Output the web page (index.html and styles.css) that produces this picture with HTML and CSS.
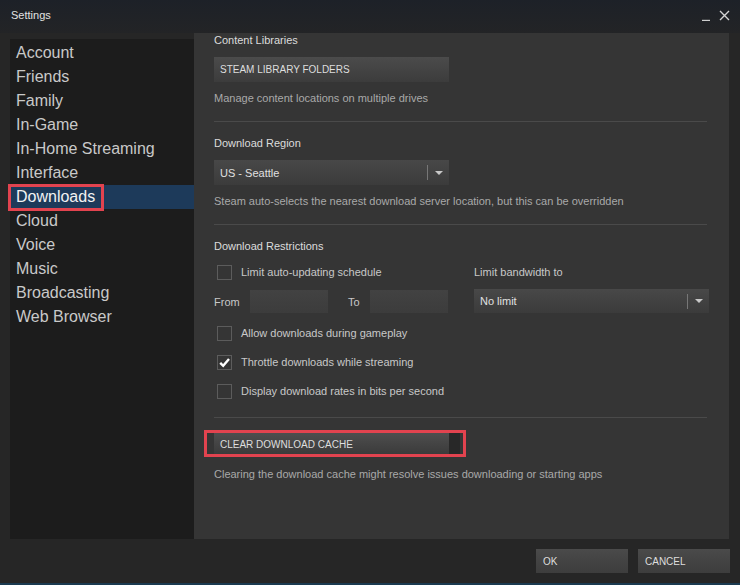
FILE: index.html
```html
<!DOCTYPE html>
<html>
<head>
<meta charset="utf-8">
<link rel="stylesheet" href="styles.css">
</head>
<body>
<div class="window">
  <div class="titlebar">
    <span class="title">Settings</span>
    <div class="controls">
      <svg class="ctl" width="10" height="10" viewBox="0 0 10 10"><path d="M1 9.5H9" stroke="#cfcfcf" stroke-width="1.4"/></svg>
      <svg class="ctl" width="11" height="11" viewBox="0 0 11 11"><path d="M1 1L10 10M10 1L1 10" stroke="#d4d4d4" stroke-width="1.4"/></svg>
    </div>
  </div>
  <div class="main">
    <nav class="sidebar">
      <div class="nav-item">Account</div>
      <div class="nav-item">Friends</div>
      <div class="nav-item">Family</div>
      <div class="nav-item">In-Game</div>
      <div class="nav-item">In-Home Streaming</div>
      <div class="nav-item">Interface</div>
      <div class="nav-item active"><span class="mark">Downloads</span></div>
      <div class="nav-item">Cloud</div>
      <div class="nav-item">Voice</div>
      <div class="nav-item">Music</div>
      <div class="nav-item">Broadcasting</div>
      <div class="nav-item">Web Browser</div>
    </nav>
    <div class="content">
      <div class="label first">Content Libraries</div>
      <div class="btn wide mt10">STEAM LIBRARY FOLDERS</div>
      <div class="desc">Manage content locations on multiple drives</div>
      <div class="sep"></div>

      <div class="label">Download Region</div>
      <div class="select mt10"><span>US - Seattle</span><span class="divider"></span><span class="arrow"></span></div>
      <div class="desc">Steam auto-selects the nearest download server location, but this can be overridden</div>
      <div class="sep"></div>

      <div class="label">Download Restrictions</div>
      <div class="restrict">
        <div class="col-left">
          <div class="check"><span class="box"></span><span>Limit auto-updating schedule</span></div>
          <div class="fromto">
            <span class="from">From</span><span class="input"></span>
            <span class="to">To</span><span class="input"></span>
          </div>
        </div>
        <div class="col-right">
          <div class="sublabel">Limit bandwidth to</div>
          <div class="select bw"><span>No limit</span><span class="divider"></span><span class="arrow"></span></div>
        </div>
      </div>
      <div class="check mt12"><span class="box"></span><span>Allow downloads during gameplay</span></div>
      <div class="check mt13"><span class="box"><svg width="13" height="13" viewBox="0 0 13 13"><path d="M2.2 6.8L5.2 9.8L11 3" fill="none" stroke="#ffffff" stroke-width="2.4"/></svg></span><span>Throttle downloads while streaming</span></div>
      <div class="check mt13"><span class="box"></span><span>Display download rates in bits per second</span></div>
      <div class="sep sep-b"></div>

      <div class="clear-wrap"><div class="btn clear">CLEAR DOWNLOAD CACHE</div></div>
      <div class="desc mt12">Clearing the download cache might resolve issues downloading or starting apps</div>
    </div>
  </div>
  <div class="footer">
    <div class="btn small">OK</div>
    <div class="btn small">CANCEL</div>
  </div>
</div>
</body>
</html>
```
FILE: styles.css
```css
* { box-sizing: border-box; }
html, body { margin: 0; padding: 0; }
body {
  width: 740px;
  height: 585px;
  overflow: hidden;
  background: #262626;
  font-family: "Liberation Sans", Arial, sans-serif;
}
.window {
  width: 740px;
  height: 585px;
  display: flex;
  flex-direction: column;
  background: #262626;
  border-bottom: 2px solid #1b3a50;
}
.titlebar {
  height: 33px;
  flex-shrink: 0;
  display: flex;
  align-items: flex-start;
  justify-content: space-between;
  background: linear-gradient(#1d2128, #232426);
  padding: 8px 10px 0 11px;
}
.title {
  color: #e2e2e2;
  font-size: 11px;
  line-height: 14px;
}
.controls {
  display: flex;
  align-items: flex-end;
  gap: 8px;
  padding-top: 2px;
}
.main {
  display: flex;
  height: 506px;
  flex-shrink: 0;
  margin: 0 11px 0 10px;
}
.sidebar {
  width: 184px;
  flex-shrink: 0;
  background: linear-gradient(#262626 0, #262626 6px, #1c1c1c 6px);
  padding-top: 8px;
}
.nav-item {
  height: 24px;
  line-height: 24px;
  padding-left: 6px;
  font-size: 16px;
  color: #c9c9c9;
  display: flex;
}
.nav-item.active {
  background: #1d3a5a;
  color: #f2f2f2;
}
.mark {
  position: relative;
  display: block;
}
.mark::after {
  content: "";
  position: absolute;
  left: -8px;
  right: -9px;
  top: -1px;
  bottom: -2px;
  border: 3px solid #e2434f;
}
.content {
  flex: 1;
  min-width: 0;
  background: #353535;
  padding: 0 22px 0 20px;
}
.label {
  color: #dcdcdc;
  font-size: 11px;
  line-height: 14px;
  margin-top: 14px;
}
.label.first { margin-top: 0; }
.desc {
  color: #a9a9a9;
  font-size: 11px;
  line-height: 14px;
  margin-top: 9px;
  white-space: nowrap;
}
.sep {
  height: 1px;
  background: #4a4a4a;
  margin-top: 16px;
}
.sep-b { margin-top: 18px; }
.mt10 { margin-top: 10px; }
.mt12 { margin-top: 12px; }
.mt13 { margin-top: 13px; }
.btn {
  background: linear-gradient(#4b4b4b, #3c3c3c);
  color: #dedede;
  font-size: 10px;
  display: flex;
  align-items: center;
  padding-left: 6px;
}
.btn.wide {
  width: 235px;
  height: 25px;
}
.select {
  width: 235px;
  height: 25px;
  background: linear-gradient(#484848, #3b3b3b);
  color: #e0e0e0;
  font-size: 11px;
  display: flex;
  align-items: center;
  padding-left: 6px;
}
.select span:first-child { flex: 1; }
.divider {
  width: 1px;
  height: 15px;
  background: #777;
}
.arrow {
  width: 21px;
  display: flex;
  justify-content: center;
}
.arrow::before {
  content: "";
  border-left: 4px solid transparent;
  border-right: 4px solid transparent;
  border-top: 4px solid #c8c8c8;
}
.restrict {
  display: flex;
  margin-top: 11px;
}
.col-left { width: 260px; flex-shrink: 0; }
.col-right { width: 235px; flex-shrink: 0; }
.check {
  height: 16px;
  display: flex;
  align-items: center;
  padding-left: 3px;
  gap: 9px;
  color: #c8c8c8;
  font-size: 11px;
}
.box {
  width: 15px;
  height: 15px;
  border: 1px solid #5c5c5c;
  display: flex;
  align-items: center;
  justify-content: center;
}
.fromto {
  display: flex;
  align-items: center;
  margin-top: 10px;
  height: 23px;
  color: #c8c8c8;
  font-size: 11px;
}
.from { width: 36px; }
.to { width: 22px; margin-left: 20px; }
.input {
  width: 78px;
  height: 23px;
  background: linear-gradient(#424242, #3c3c3c);
}
.sublabel {
  color: #c8c8c8;
  font-size: 11px;
  line-height: 16px;
}
.select.bw {
  margin-top: 9px;
  height: 24px;
}
.clear-wrap {
  margin-top: 15px;
  width: 246px;
  position: relative;
}
.clear-wrap::after {
  content: "";
  position: absolute;
  left: -10px;
  right: -6px;
  top: -3px;
  bottom: -2px;
  border: 3px solid #e2434f;
}
.btn.clear {
  width: 246px;
  height: 22px;
  background: linear-gradient(90deg, transparent 235px, #282828 235px), linear-gradient(#4e4e4e, #3a3a3a);
}
.footer {
  flex: 1;
  display: flex;
  justify-content: flex-end;
  align-items: flex-start;
  gap: 10px;
  padding: 10px 10px 0 0;
}
.btn.small {
  width: 92px;
  height: 24px;
  padding-left: 7px;
  background: linear-gradient(#4a4a4a, #3d3d3d);
}
```
